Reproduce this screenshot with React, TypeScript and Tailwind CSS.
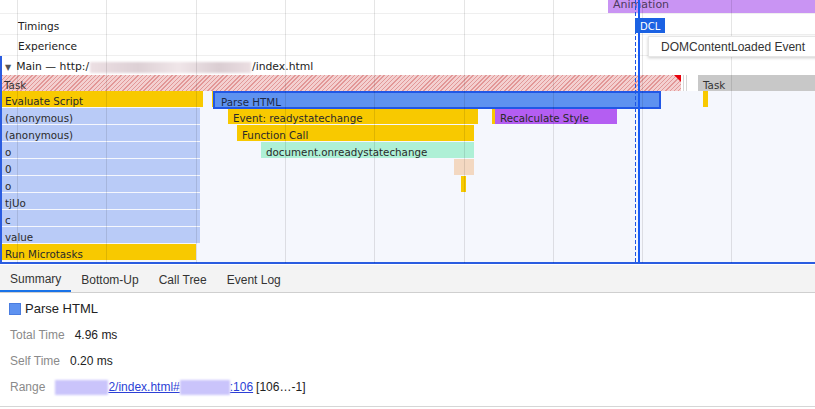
import React from 'react'

const GRID = [17, 106, 196, 285, 374, 464, 553, 642, 731]

const YELLOW = 'bg-[#f8c900]'
const BLUE = 'bg-[#b9cbf7]'

type Bar = { x: number; w: number; c: string; t?: string }

const flame: Bar[][] = [
  [
    { x: 2, w: 201, c: YELLOW, t: 'Evaluate Script' },
    { x: 212, w: 1, c: YELLOW },
    { x: 703, w: 1, c: YELLOW },
  ],
  [
    { x: 2, w: 198, c: BLUE, t: '(anonymous)' },
    { x: 228, w: 250, c: YELLOW, t: 'Event: readystatechange' },
    { x: 492, w: 1, c: YELLOW },
    { x: 495, w: 122, c: 'bg-[#b45ef2]', t: 'Recalculate Style' },
  ],
  [
    { x: 2, w: 198, c: BLUE, t: '(anonymous)' },
    { x: 237, w: 237, c: YELLOW, t: 'Function Call' },
  ],
  [
    { x: 2, w: 198, c: BLUE, t: 'o' },
    { x: 261, w: 213, c: 'bg-[#aef0d6]', t: 'document.onreadystatechange' },
  ],
  [
    { x: 2, w: 198, c: BLUE, t: '0' },
    { x: 454, w: 20, c: 'bg-[#f3d8c1]' },
  ],
  [
    { x: 2, w: 198, c: BLUE, t: 'o' },
    { x: 461, w: 1, c: YELLOW },
  ],
  [{ x: 2, w: 198, c: BLUE, t: 'tjUo' }],
  [{ x: 2, w: 198, c: BLUE, t: 'c' }],
  [{ x: 2, w: 198, c: BLUE, t: 'value' }],
  [{ x: 2, w: 194, c: YELLOW, t: 'Run Microtasks' }],
]

const tabs = ['Summary', 'Bottom-Up', 'Call Tree', 'Event Log']

export default function App() {
  return (
    <div className="h-[409px] w-[815px] overflow-hidden bg-white font-['Liberation_Sans',sans-serif] text-[#222]">
      {/* Timeline */}
      <div className="relative h-[265px] font-['DejaVu_Sans',sans-serif] text-[10.3px]">
        {/* top strip with animation track */}
        <div className="relative h-[14px] border-b border-[#efefef]">
          <div className="absolute left-[608px] right-0 top-0 h-[13px] overflow-hidden bg-[#c994f3] pl-[5px] text-[11px] leading-[9px] text-[#4d3a5e]">
            Animation
          </div>
        </div>
        <div className="flex h-[21px] items-center border-b border-[#efefef] pl-[18px] pt-[5px] text-[10.6px]">Timings</div>
        <div className="flex h-[21px] items-center border-b border-[#efefef] pl-[18px] pt-[4px] text-[10.6px]">Experience</div>

        {/* Main track */}
        <div className="border-b-2 border-l-2 border-[#2a5ce0]">
          <div className="flex h-[19px] items-center pl-[3px] pt-[4px] text-[10.8px]">
            <span className="mr-[5px] text-[8px] text-[#555]">▼</span>
            <span>Main — http:/</span>
            <span className="mx-[1px] h-[11px] w-[161px] bg-[linear-gradient(90deg,#ecdfe3,#ddd0d5_30%,#f0e6e9_55%,#dacdd2_80%,#ebdee2)] blur-[1px]" />
            <span>/index.html</span>
          </div>

          {/* Task row */}
          <div className="relative h-[16px]">
            <div className="absolute left-0 top-0 h-full w-[679px] bg-[image:repeating-linear-gradient(135deg,#e29797_0px,#e29797_1px,#f3d0d0_1px,#f3d0d0_3px)] pl-[2px] leading-[20px] text-[#333]">
              Task
              <div className="absolute right-0 top-0 h-0 w-0 border-l-[7px] border-t-[7px] border-l-transparent border-t-[#e8000b]" />
            </div>
            <div className="absolute left-[681px] top-0 h-full w-px bg-[#d6d6d6]" />
            <div className="absolute left-[684px] top-0 h-full w-px bg-[#d6d6d6]" />
            <div className="absolute left-[696px] right-0 top-0 h-full bg-[#c8c8c8] pl-[5px] leading-[20px] text-[#333]">
              Task
            </div>
          </div>

          {/* Flame chart */}
          <div className="bg-[#f5f7fd] pb-px">
            {flame.map((row, i) => (
              <div key={i} className="relative h-[17px]">
                {i === 0 && (
                  <div className="absolute left-[211px] top-0 z-[1] h-[18px] w-[448px] overflow-hidden border-2 border-[#2157e6] bg-[#5e92f0] pl-[6px] leading-[18px] text-[#1c2a4a]">
                    Parse HTML
                  </div>
                )}
                {row.map((b) => (
                  <div
                    key={b.x}
                    className={`absolute top-0 h-[16px] overflow-hidden whitespace-nowrap leading-[20px] text-[#2a2a2a] ${b.c} ${b.x < 10 ? 'pl-[3px]' : 'pl-[5px]'}`}
                    style={{ left: b.x - 2, width: b.w }}
                  >
                    {b.t}
                  </div>
                ))}
              </div>
            ))}
          </div>
        </div>

        {/* Grid lines */}
        {GRID.map((x) => (
          <div
            key={x}
            className="pointer-events-none absolute top-0 z-[2] h-[263px] w-px bg-black/10"
            style={{ left: x }}
          />
        ))}

        {/* DCL markers */}
        <div className="absolute left-[635px] top-0 z-[3] h-[263px] w-px bg-[image:repeating-linear-gradient(180deg,#1d55e6_0px,#1d55e6_4px,transparent_4px,transparent_6px)]" />
        <div className="absolute left-[638px] top-0 z-[3] h-[263px] w-[2px] bg-[#1a5cf2]" />
        <div className="absolute left-[635px] top-[18px] z-[4] flex h-[15px] w-[30px] items-center bg-[#1b62e3] pl-[5px] pt-[2px] text-[10px] text-white">
          DCL
        </div>
        <div className="absolute left-[648px] top-[36px] z-[4] flex h-[21px] w-[180px] items-center border border-[#e6e6e6] bg-white pl-[12px] font-['Liberation_Sans',sans-serif] text-[12px] text-[#333] shadow-[0_1px_3px_rgba(0,0,0,0.2)]">
          DOMContentLoaded Event
        </div>
      </div>

      {/* Tabs */}
      <div className="flex h-[28px] border-b border-[#cfcfcf] bg-[#f3f3f3] text-[12px] text-[#333]">
        {tabs.map((t, i) => (
          <div
            key={t}
            className={`flex items-center px-[10px] pt-[2px] ${i === 0 ? 'border-b-2 border-[#1a73e8]' : ''}`}
          >
            {t}
          </div>
        ))}
      </div>

      {/* Summary */}
      <div className="h-[114px] border-b border-[#d6d6d6] px-[9px] pt-[8px] text-[12px]">
        <div className="flex h-[16px] items-center gap-[4px] text-[13px] text-[#222]">
          <span className="h-[12px] w-[12px] border border-[#4a7de0] bg-[#5e92f0]" />
          Parse HTML
        </div>
        <div className="mt-[5px] flex flex-col pl-px">
          <div className="flex h-[26px] items-center gap-[10px]">
            <span className="text-[#8a8a8a]">Total Time</span>
            <span>4.96 ms</span>
          </div>
          <div className="flex h-[26px] items-center gap-[10px]">
            <span className="text-[#8a8a8a]">Self Time</span>
            <span>0.20 ms</span>
          </div>
          <div className="flex h-[26px] items-center gap-[10px]">
            <span className="text-[#8a8a8a]">Range</span>
            <span className="flex items-center">
              <span className="h-[15px] w-[53px] bg-[#cac4fb] blur-[1px]" />
              <span className="text-[#2c3fd6] underline">2/index.html#</span>
              <span className="h-[15px] w-[50px] bg-[#cac4fb] blur-[1px]" />
              <span className="text-[#2c3fd6] underline">:106</span>
              <span className="ml-[3px]">[106…-1]</span>
            </span>
          </div>
        </div>
      </div>
    </div>
  )
}
